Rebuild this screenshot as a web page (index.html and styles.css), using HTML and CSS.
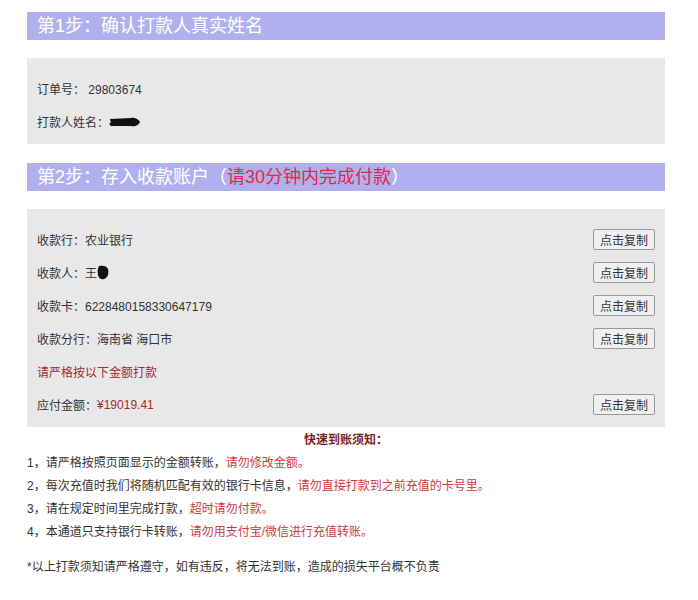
FILE: index.html
```html
<html>
  <head>
    <meta charset="utf-8">
    <link rel="stylesheet" href="styles.css">
  </head>
  <body>
    <div class="wrap">
      <div class="step">第1步：确认打款人真实姓名</div>
      <div class="panel">
        <div class="row"><span>订单号： 29803674</span></div>
        <div class="row">
          <span>打款人姓名：<svg class="blot" width="32" height="12" viewBox="0 0 32 12"><path d="M1 3 L22 2 C26 1 30 4 31 6 C30 9 26 11 22 10 L2 10 C0 9 0 7 2 6 L1 4 Z" fill="#111"/></svg></span>
        </div>
      </div>

      <div class="step">第2步：存入收款账户（<em>请30分钟内完成付款</em>）</div>
      <div class="panel last">
        <div class="row"><span>收款行：农业银行</span><button>点击复制</button></div>
        <div class="row">
          <span>收款人：王<svg class="blot" width="12" height="15" viewBox="0 0 12 15"><path d="M2 1 C6 0 10 1 11 4 C12 8 11 13 7 14 C3 15 1 12 1 9 C0 6 1 3 2 1 Z" fill="#111"/></svg></span>
          <button>点击复制</button>
        </div>
        <div class="row"><span>收款卡：6228480158330647179</span><button>点击复制</button></div>
        <div class="row"><span>收款分行：海南省 海口市</span><button>点击复制</button></div>
        <div class="row warn"><span>请严格按以下金额打款</span></div>
        <div class="row"><span>应付金额：<b class="money">¥19019.41</b></span><button>点击复制</button></div>
      </div>

      <div class="notice">
        <h4>快速到账须知：</h4>
        <p>1，请严格按照页面显示的金额转账，<i>请勿修改金额。</i></p>
        <p>2，每次充值时我们将随机匹配有效的银行卡信息，<i>请勿直接打款到之前充值的卡号里。</i></p>
        <p>3，请在规定时间里完成打款，<i>超时请勿付款。</i></p>
        <p>4，本通道只支持银行卡转账，<i>请勿用支付宝/微信进行充值转账。</i></p>
        <p class="foot">*以上打款须知请严格遵守，如有违反，将无法到账，造成的损失平台概不负责</p>
      </div>
    </div>
  </body>
</html>
```

FILE: styles.css
```css
body {
  margin: 0;
  background: #fff;
  font-family: "Liberation Sans", "Noto Sans CJK SC", sans-serif;
  font-size: 12px;
  color: #333;
}
.wrap {
  width: 638px;
  margin-left: 27px;
  padding-top: 12px;
}
.step {
  height: 28px;
  line-height: 28px;
  padding-left: 10px;
  background-color: #b0b0ee;
  color: #fff;
  font-size: 18px;
}
.step em {
  font-style: normal;
  color: #e8234a;
}
.panel {
  margin: 18px 0 19px;
  padding: 14px 10px 6px;
  background-color: #e8e8e8;
}
.panel.last {
  margin-bottom: 2px;
}
.row {
  display: flex;
  align-items: center;
  justify-content: space-between;
  height: 33px;
}
.row span {
  display: flex;
  align-items: center;
}
.blot {
  display: block;
}
.warn {
  color: #a52a2a;
}
.money {
  font-weight: normal;
  color: #a52a2a;
}
button {
  width: 62px;
  height: 21px;
  padding: 0;
  font-family: inherit;
  font-size: 12px;
  color: #333;
  background: #f0f0f0;
  border: 1px solid #999;
  border-radius: 2px;
}
.notice {
  line-height: 23px;
}
.notice h4 {
  margin: 0;
  text-align: center;
  font-size: 12px;
  color: #7a1e1e;
}
.notice p {
  margin: 0;
}
.notice i {
  font-style: normal;
  color: #d0393b;
}
.notice .foot {
  margin-top: 12px;
}
```
